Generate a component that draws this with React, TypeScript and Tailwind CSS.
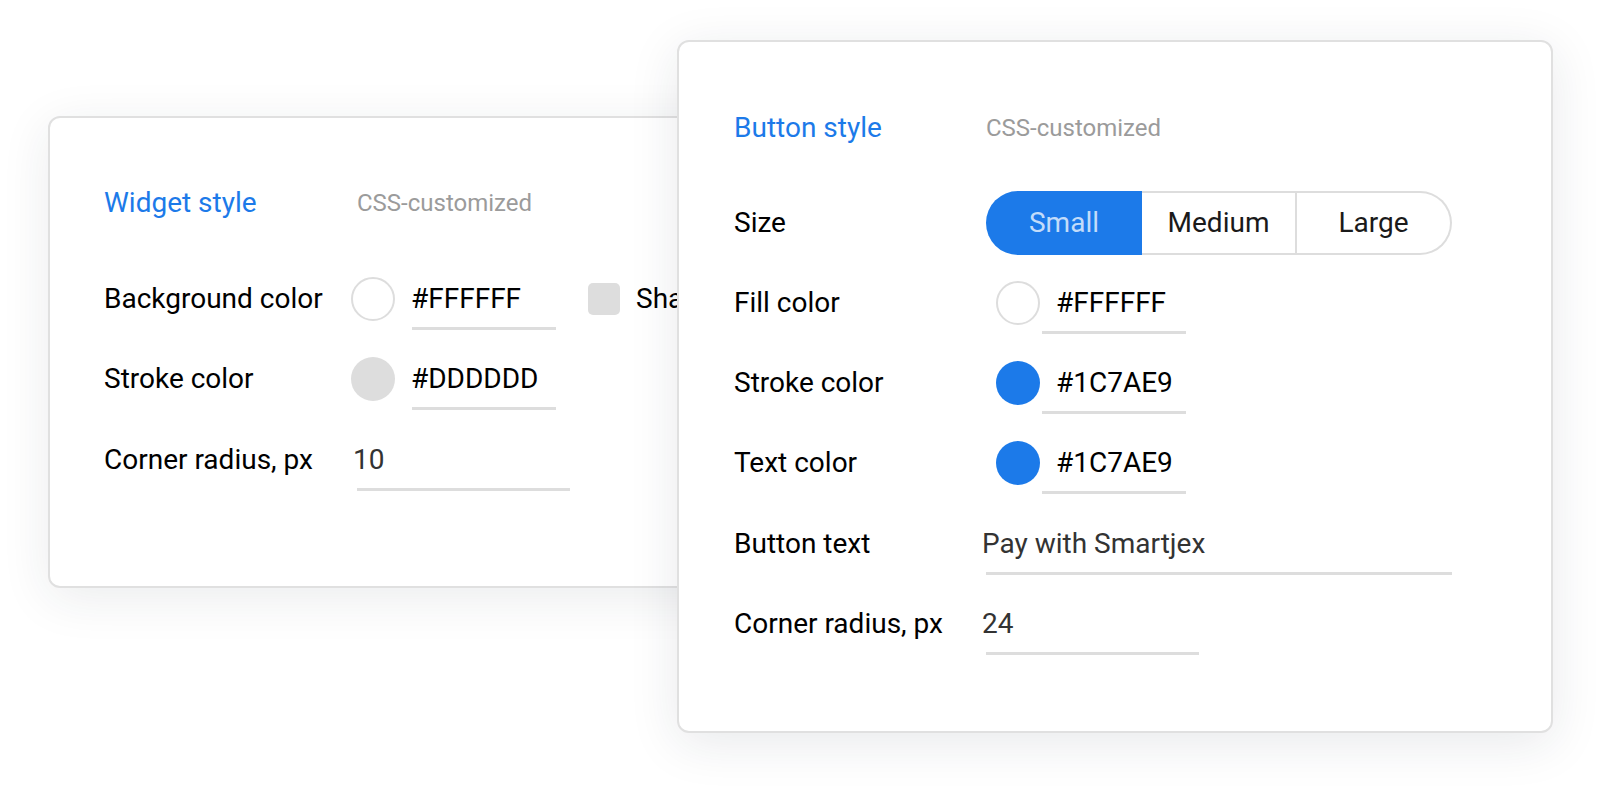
import React from "react";

const font = { fontFamily: "Roboto, 'Noto Sans', sans-serif" };

function Circle({ color, bordered }: { color: string; bordered?: boolean }) {
  return (
    <div
      className={
        "h-[44px] w-[44px] shrink-0 rounded-full " +
        (bordered ? "border-2 border-[#dddddd] bg-white" : "")
      }
      style={bordered ? undefined : { backgroundColor: color }}
    />
  );
}

function Field({
  value,
  width,
  textClass,
  gapClass,
}: {
  value: string;
  width: string;
  textClass: string;
  gapClass?: string;
}) {
  return (
    <div className={"flex flex-col mt-[9px] " + width + " " + (gapClass ?? "")}>
      <span className={"h-[44px] leading-[44px] whitespace-nowrap " + textClass}>{value}</span>
      <div className="mt-[6px] h-[3px] w-full bg-[#dddddd]" />
    </div>
  );
}

export default function App() {
  return (
    <div className="relative h-[790px] w-[1602px] overflow-hidden bg-white" style={font}>
      {/* Widget style card (behind) */}
      <div className="absolute left-[48px] top-[116px] h-[472px] w-[780px] rounded-[12px] border-2 border-[#e0e0e0] bg-white shadow-[0_10px_50px_rgba(30,40,60,0.09)]">
        <div className="flex flex-col pl-[54px] pt-[45px]">
          <div className="flex h-[80px] items-center">
            <span className="w-[253px] text-[28px] text-[#1c7ae9]">Widget style</span>
            <span className="text-[24px] text-[#9b9b9b]">CSS-customized</span>
          </div>
          <div className="mt-[16px] flex h-[80px] items-center text-[28px] text-black">
            <span className="w-[247px] whitespace-nowrap">Background color</span>
            <Circle color="#ffffff" bordered />
            <Field value="#FFFFFF" width="w-[144px]" textClass="text-black -ml-[1px]" gapClass="ml-[17px]" />
            <div className="ml-[32px] h-[32px] w-[32px] shrink-0 rounded-[5px] bg-[#dddddd]" />
            <span className="ml-[16px] whitespace-nowrap">Shadow</span>
          </div>
          <div className="flex h-[80px] items-center text-[28px] text-black">
            <span className="w-[247px] whitespace-nowrap">Stroke color</span>
            <Circle color="#dddddd" />
            <Field value="#DDDDDD" width="w-[144px]" textClass="text-black -ml-[1px]" gapClass="ml-[17px]" />
          </div>
          <div className="mt-[1px] flex h-[80px] items-center text-[28px] text-black">
            <span className="w-[253px] whitespace-nowrap">Corner radius, px</span>
            <Field value="10" width="w-[213px]" textClass="text-[#333333] -ml-[4px]" />
          </div>
        </div>
      </div>

      {/* Button style card (front) */}
      <div className="absolute left-[677px] top-[40px] h-[693px] w-[876px] rounded-[12px] border-2 border-[#e0e0e0] bg-white shadow-[0_10px_50px_rgba(30,40,60,0.10)]">
        <div className="flex flex-col pl-[55px] pt-[46px]">
          <div className="flex h-[80px] items-center">
            <span className="w-[252px] text-[28px] text-[#1c7ae9]">Button style</span>
            <span className="text-[24px] text-[#9b9b9b]">CSS-customized</span>
          </div>
          <div className="mt-[15px] flex h-[80px] items-center text-[28px] text-black">
            <span className="w-[252px]">Size</span>
            <div className="flex h-[64px] w-[466px] text-[#1a1a1a]">
              <div className="flex w-[156px] items-center justify-center rounded-l-full bg-[#1c7ae9] text-[#c2dcfa]">
                Small
              </div>
              <div className="flex w-[155px] items-center justify-center border-y-2 border-r-2 border-[#dddddd]">
                Medium
              </div>
              <div className="flex w-[155px] items-center justify-center rounded-r-full border-y-2 border-r-2 border-[#dddddd]">
                Large
              </div>
            </div>
          </div>
          <div className="flex h-[80px] items-center text-[28px] text-black">
            <span className="w-[262px]">Fill color</span>
            <Circle color="#ffffff" bordered />
            <Field value="#FFFFFF" width="w-[144px]" textClass="text-black pl-[14px]" gapClass="ml-[2px]" />
          </div>
          <div className="flex h-[80px] items-center text-[28px] text-black">
            <span className="w-[262px]">Stroke color</span>
            <Circle color="#1c7ae9" />
            <Field value="#1C7AE9" width="w-[144px]" textClass="text-black pl-[14px]" gapClass="ml-[2px]" />
          </div>
          <div className="flex h-[80px] items-center text-[28px] text-black">
            <span className="w-[262px]">Text color</span>
            <Circle color="#1c7ae9" />
            <Field value="#1C7AE9" width="w-[144px]" textClass="text-black pl-[14px]" gapClass="ml-[2px]" />
          </div>
          <div className="mt-[1px] flex h-[80px] items-center text-[28px] text-black">
            <span className="w-[252px]">Button text</span>
            <Field value="Pay with Smartjex" width="w-[466px]" textClass="text-[#333333] -ml-[4px]" />
          </div>
          <div className="flex h-[80px] items-center text-[28px] text-black">
            <span className="w-[252px] whitespace-nowrap">Corner radius, px</span>
            <Field value="24" width="w-[213px]" textClass="text-[#333333] -ml-[4px]" />
          </div>
        </div>
      </div>
    </div>
  );
}
